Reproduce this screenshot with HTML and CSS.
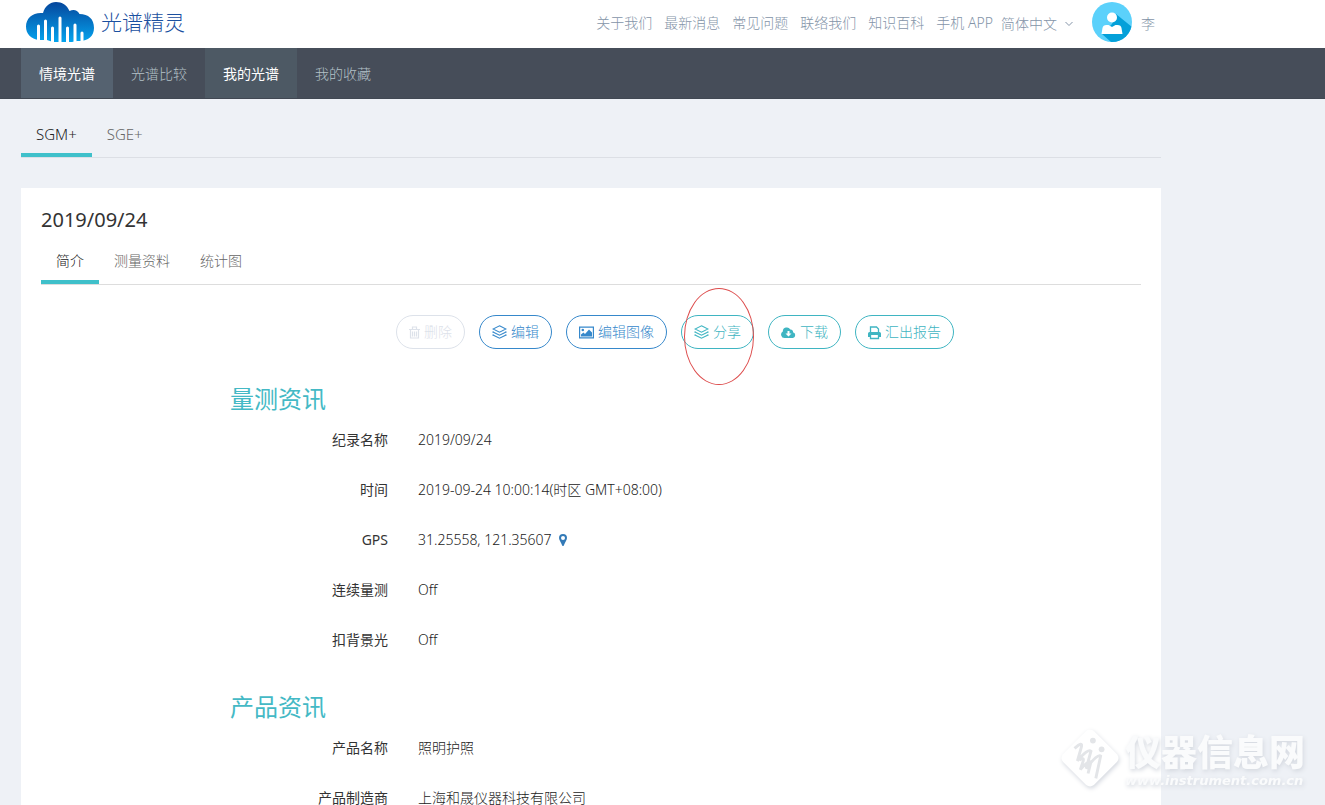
FILE: index.html
```html
<!DOCTYPE html>
<html lang="zh-CN">
<head>
<meta charset="utf-8">
<title>光谱精灵</title>
<link rel="stylesheet" href="styles.css">
</head>
<body>
<svg class="defs" aria-hidden="true">
  <symbol id="layers" viewBox="0 0 15 15"><path d="M7.500 .8L14 4 7.500 7.200 1 4zM1.500 6.500L1 7 7.500 10.200 14 7 13.500 6.500M1.500 9.500L1 10 7.500 13.200 14 10 13.500 9.500" fill="none" stroke="currentColor" stroke-width="1.100"/></symbol>
</svg>
<header class="top">
  <div class="wrap top-row">
    <a class="brand" href="#">
      <svg class="cloud" viewBox="0 0 70 42" aria-hidden="true">
        <defs><linearGradient id="sky" x1="0" y1="0" x2="0" y2="1"><stop offset="0" stop-color="#06469c"/><stop offset="1" stop-color="#04a4ee"/></linearGradient></defs>
        <path d="M14 39C6 38 1 33 1 25.500 1 17 8 11 18 12 20 5 25 1 31 1c6 0 11 3 13.500 9 4-2 8-1 10 3 9 0 14.500 5 14.500 14 0 8-6 13-14 13l-3 0-5 1H28l-6-2z" fill="url(#sky)"/>
        <path d="M13.500 25v17M20.500 20v22M27.500 27v15M35 17v25M42.500 27v15M50 24v18M57 32v10" stroke="#fff" stroke-width="3" stroke-linecap="round"/>
      </svg>
      <span>光谱精灵</span>
    </a>
    <nav class="links">
      <a href="#">关于我们</a><a href="#">最新消息</a><a href="#">常见问题</a><a href="#">联络我们</a><a href="#">知识百科</a><a href="#">手机 APP</a>
    </nav>
    <button class="lang" type="button">简体中文
      <svg viewBox="0 0 8 6" aria-hidden="true"><path d="M.5 1L4 4.500 7.500 1" fill="none" stroke="currentColor"/></svg>
    </button>
    <a class="user" href="#">
      <svg viewBox="0 0 40 40" aria-hidden="true">
        <defs><clipPath id="disc"><circle cx="20" cy="20" r="20"/></clipPath></defs>
        <g clip-path="url(#disc)"><path d="M0 0h40v40H0z" fill="#5bd1fb"/><path d="M24 12L40 25v15H19L10 32l10-10z" fill="#04a0d9"/></g>
        <circle cx="20" cy="15.500" r="5" fill="#fff"/><path d="M9.500 32l1-6q.5-3 4-3h2l3.500 2 3.500-2h2q3.500 0 4 3l1 6z" fill="#fff"/>
      </svg>
      <span>李</span>
    </a>
  </div>
</header>
<nav class="main-nav">
  <div class="wrap nav-row">
    <a class="current" href="#">情境光谱</a><a href="#">光谱比较</a><a class="hover" href="#">我的光谱</a><a href="#">我的收藏</a>
  </div>
</nav>
<main class="wrap">
  <nav class="tabs series"><a class="active" href="#">SGM+</a><a href="#">SGE+</a></nav>
  <section class="card">
    <h1>2019/09/24</h1>
    <nav class="tabs inner"><a class="active" href="#">简介</a><a href="#">测量资料</a><a href="#">统计图</a></nav>
    <div class="actions">
      <button class="pill" type="button" disabled><svg class="narrow" viewBox="2 0 11 15" aria-hidden="true"><path d="M2 4.500h11M5.500 4V2h4v2M3.500 5v8h8V5M5.500 6.500v5M7.500 6.500v5M9.500 6.500v5" fill="none" stroke="currentColor" stroke-width="1.200"/></svg>删除</button>
      <button class="pill blue" type="button"><svg aria-hidden="true"><use href="#layers"/></svg>编辑</button>
      <button class="pill blue" type="button"><svg viewBox="0 0 15 15" aria-hidden="true"><path d="M.6 2.100h13.800v10.800H.6z" fill="none" stroke="currentColor" stroke-width="1.200"/><circle cx="3.800" cy="5" r="1.300" fill="currentColor"/><path d="M2 11.500V9.500L4.500 7.500 6 9l4-4.500 3 3v4z" fill="currentColor"/></svg>编辑图像</button>
      <span class="marked"><button class="pill teal" type="button"><svg aria-hidden="true"><use href="#layers"/></svg>分享</button></span>
      <button class="pill teal" type="button"><svg viewBox="0 0 15 15" aria-hidden="true"><path d="M3.500 13A3.500 3.500 0 0 1 1.800 6.500 4 4 0 0 1 9.300 4.500 2.300 2.300 0 0 1 12 7.200 3 3 0 0 1 12 13z" fill="currentColor"/><path d="M6.500 6h2v2.500h2L7.500 11.500l-3-3h2z" fill="#fff"/></svg>下载</button>
      <button class="pill teal" type="button"><svg class="medium" viewBox="1 0 13 15" aria-hidden="true"><path d="M3.500 7V2h6l2 2v3M3.500 9.500v4h8v-4" fill="none" stroke="currentColor" stroke-width="1.300"/><path d="M1 12V8.500Q1 7 2.500 7h10Q14 7 14 8.500V12h-2v-2H3v2z" fill="currentColor"/></svg>汇出报告</button>
    </div>
    <div class="info">
      <h2>量测资讯</h2>
      <dl>
        <dt>纪录名称</dt><dd>2019/09/24</dd>
        <dt>时间</dt><dd>2019-09-24 10:00:14(时区 GMT+08:00)</dd>
        <dt>GPS</dt><dd>31.25558, 121.35607 <a class="pin" href="#" aria-label="GPS"><svg viewBox="0 0 8 12" aria-hidden="true"><path d="M4 0a4 4 0 0 1 4 4C8 6 6 8 4.800 11.500Q4 12.500 3.200 11.500C2 8 0 6 0 4a4 4 0 0 1 4-4zm0 2a2 2 0 1 0 0 4 2 2 0 0 0 0-4z" fill="currentColor" fill-rule="evenodd"/></svg></a></dd>
        <dt>连续量测</dt><dd>Off</dd>
        <dt>扣背景光</dt><dd>Off</dd>
      </dl>
      <h2>产品资讯</h2>
      <dl>
        <dt>产品名称</dt><dd>照明护照</dd>
        <dt>产品制造商</dt><dd>上海和晟仪器科技有限公司</dd>
      </dl>
    </div>
  </section>
</main>
<div class="watermark" aria-hidden="true">
  <svg viewBox="0 0 62 62"><path d="M27 3Q31 0 35 3L59 27Q62 31 59 35L35 59Q31 62 27 59L3 35Q0 31 3 27z" fill="#fff"/><path d="M15 21Q24 13 22 20L18 34Q29 21 32 24L27 42Q39 26 42 29L37 52M20 33Q25 30 24 34L21 43Q29 33 32 35L29 47" fill="none" stroke="#e3e5e8" stroke-width="3"/><circle cx="34" cy="13" r="3" fill="#e3e5e8"/><circle cx="43" cy="22" r="3" fill="#e3e5e8"/></svg>
  <div><strong>仪器信息网</strong><span>www.instrument.com.cn</span></div>
</div>
</body>
</html>
```
FILE: styles.css
```css
* { box-sizing: border-box; }
body { margin: 0; height: 100vh; overflow: hidden; background: #eef1f6; color: #333; font: 300 14px/20px "Noto Sans", "Noto Sans CJK SC", sans-serif; }
a { color: inherit; text-decoration: none; }
h1, h2, dl, dd { margin: 0; }
svg { flex: none; }
.defs { position: absolute; width: 0; height: 0; }
.wrap { max-width: 1140px; margin-left: 21px; }
.top { background: #fff; }
.top-row { display: flex; align-items: center; height: 48px; color: #8494a8; }
.brand { display: flex; align-items: center; gap: 6px; margin: 0 auto 4px 4px; color: #1b50a0; font-size: 21px; line-height: 30px; }
.cloud { width: 70px; height: 42px; }
.links { display: flex; gap: 12px; margin-bottom: 2px; }
.lang { display: flex; align-items: center; gap: 8px; margin-left: 8px; padding: 0; border: 0; background: none; color: inherit; font: inherit; }
.lang svg { width: 8px; height: 6px; }
.user { display: flex; align-items: center; gap: 9px; margin: 0 6px 0 19px; }
.user svg { width: 40px; height: 40px; margin-bottom: 4px; }
.main-nav { background: #464d59; border-bottom: 1px solid #414853; }
.nav-row { display: flex; }
.nav-row a { padding: 16px 18px 14px; color: #b4c2c8; }
.nav-row .current { background: #556270; color: #fff; font-weight: 400; }
.nav-row .hover { background: #4d5964; color: #fff; font-weight: 400; }
.tabs { display: flex; margin: 14px 0 30px; border-bottom: 1px solid #dcdfe5; color: #666; }
.tabs a { padding: 11px 15px 9px; border-bottom: 4px solid transparent; }
.tabs .active { border-color: #3fc0ca; color: #222; }
.series { font-size: 15px; }
.card { min-height: calc(100vh - 188px); padding: 20px 20px 0; background: #fff; }
h1 { font: 400 20px/24px "Noto Sans", sans-serif; }
.inner { margin: 6px 0 30px; border-color: #ddd; }
.inner a { padding: 13px 15px 9px; }
.actions { display: flex; justify-content: center; gap: 14px; padding-left: 168px; }
.pill { display: flex; align-items: center; gap: 4px; height: 34px; padding: 0 12px; border: 1px solid currentColor; border-radius: 17px; background: none; color: #3fb5c2; font: inherit; }
.pill svg { width: 15px; height: 15px; }
.pill .narrow { width: 11px; }
.pill .medium { width: 13px; }
.pill:disabled { color: #dde2ea; }
.pill.blue { color: #3688cb; }
.marked { position: relative; }
.marked::after { content: ""; position: absolute; left: 3px; top: -27px; width: 68px; height: 95px; border: 1px solid #dd4c4c; border-radius: 50%; }
.info { padding-left: 189px; }
h2 { margin-top: 33px; color: #44b9c5; font: 400 24px/32px "Noto Sans CJK SC", sans-serif; }
dl { display: grid; grid-template-columns: 158px 1fr; gap: 30px; margin-top: 16px; padding-bottom: 7px; }
dt { text-align: right; font-weight: 400; }
dd { color: #222; }
.pin { margin-left: 4px; color: #337ab7; }
.pin svg { width: 8px; height: 12px; vertical-align: -1px; }
.watermark { position: fixed; right: 20px; bottom: 16px; display: flex; align-items: center; gap: 5px; color: #fafbfc; filter: drop-shadow(1px 2px 2px #d4d8df); }
.watermark svg { width: 60px; height: 60px; }
.watermark strong, .watermark span { display: block; }
.watermark strong { font: 900 36px/46px "Noto Sans CJK SC", sans-serif; }
.watermark span { font: italic 700 13px/16px "DejaVu Sans", sans-serif; }
```
